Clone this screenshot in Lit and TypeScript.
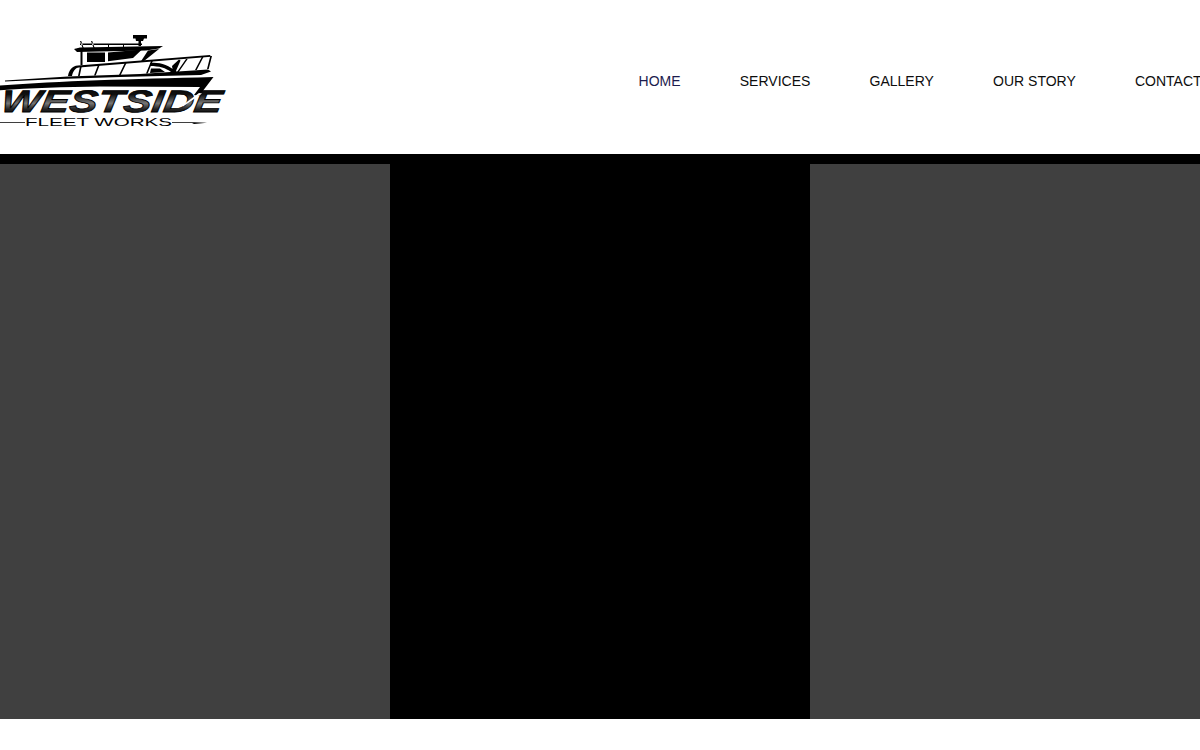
import { LitElement, html, css } from "lit";
import { customElement } from "lit/decorators.js";

const NAV = ["HOME", "SERVICES", "GALLERY", "OUR STORY", "CONTACT"];

@customElement("app-root")
export class AppRoot extends LitElement {
  static styles = css`
    :host { display: block; width: 1200px; overflow: hidden; background: #fff; font-family: "Liberation Sans", Arial, sans-serif; }
    .header { height: 154px; display: flex; justify-content: space-between; align-items: center; background: #fff; overflow: hidden; }
    .logo { display: block; flex: none; width: 230px; height: 154px; }
    .logo .name { font-family: "Liberation Sans", Arial, sans-serif; font-weight: 700; font-style: italic; font-size: 31px; stroke: #000; stroke-width: .8px; }
    .logo .sub { font-family: "Liberation Sans", Arial, sans-serif; font-size: 11px; fill: #000; }
    nav { display: flex; gap: 59.2px; margin-right: -1.6px; flex: none; position: relative; top: 4px; }
    nav a { font-size: 14px; line-height: 16px; color: #0d0d0d; text-decoration: none; white-space: nowrap; }
    nav a.active { color: #1c1c4e; }
    .hero { background: #000; padding-top: 10px; display: flex; justify-content: space-between; }
    .panel { width: 390px; height: 555px; background: #404040; }
  `;

  private logo() {
    return html`<svg class="logo" viewBox="0 0 230 154" aria-label="Westside Fleet Works">
      <defs>
        <linearGradient id="nameFill" x1="0" y1="0" x2="0" y2="1">
          <stop offset="0" stop-color="#000"/><stop offset=".3" stop-color="#111"/>
          <stop offset=".55" stop-color="#777"/><stop offset=".72" stop-color="#222"/><stop offset="1" stop-color="#000"/>
        </linearGradient>
      </defs>
      <!-- radar and mast -->
      <path d="M133 35h14v3.500h-3l-1 2.500h-2v5h-2.500v-5h-2.500l-.5-2.500h-2.500z"/>
      <!-- rail -->
      <path d="M80 43.600h62v1.300H80zM80 41l2.500 7h1.200l-2.500-7zM91 41l2.500 7h1.200l-2.500-7zM108 44h1v4h-1zM123 44h1v4h-1z"/>
      <!-- flybridge roof -->
      <path d="M74 49l6-1.500 83-1.500-4 2.500-13 2L77 52z"/>
      <!-- cabin -->
      <path d="M80.500 50h2v15h-2zM87 52.500h18v9.500H87zM108 52.500l34-3-9 8.500-25 3.200z"/>
      <path d="M148 50.500l11-1.500-15 12-3 .3z"/>
      <!-- lower deck roof and window posts -->
      <path d="M68 76c1-6 4-10 10-10.500L210 55l1 1.800L79 67.500c-4 .4-6 4-7 8.500z"/>
      <path d="M78 76h1.700l2-9.500H80zM94 75.500h1.700l4-10.500H98zM119 75h1.700l6.300-13h-1.700zM146 73.500h1.700l5.300-13h-1.700zM177 72h1.700l9-13H186zM195 70h1.700l7.300-14h-1.700zM207 69h1.700l3.300-13h-1.700z"/>
      <!-- wheelhouse side glass -->
      <path d="M150 63c10-1 18 2 27 9h-6c-5-4-12-6-21-6zM151 68.500h9l5 3.500-15 1z"/>
      <path d="M172 66l7-6.500 1.500 1-5 11.500-2.500 0z"/>
      <!-- deck stripe -->
      <path d="M5 80.500L68 76.500l72-2.500 68-4.500 3 2-10 3.500-81 2-60 2-55 2.500z"/>
      <!-- hull -->
      <path d="M0 85.500c60-4.500 130-6.500 213.500-8.500L199 96l-5-1 6-8-100-.5c-35 .5-70 1.500-100 3.800z"/>
      <text class="name" x="0" y="112" transform="translate(15.800 0) skewX(-8)" textLength="221" lengthAdjust="spacingAndGlyphs" fill="url(#nameFill)">WESTSIDE</text>
      <path d="M199 93l3 .5-19 13-1-1z" fill="#fff"/>
      <!-- sub line -->
      <path d="M0 122.200h25v.8H0zM172 122.200h22l13 .5-13 1.300-2-.9h-20z"/>
      <text class="sub" x="25" y="126.300" textLength="147" lengthAdjust="spacingAndGlyphs">FLEET WORKS</text>
    </svg>`;
  }

  render() {
    return html`
      <header class="header">
        ${this.logo()}
        <nav>
          ${NAV.map((n, i) => html`<a href="#" class=${i === 0 ? "active" : ""}>${n}</a>`)}
        </nav>
      </header>
      <section class="hero">
        <div class="panel"></div>
        <div class="panel"></div>
      </section>
    `;
  }
}
